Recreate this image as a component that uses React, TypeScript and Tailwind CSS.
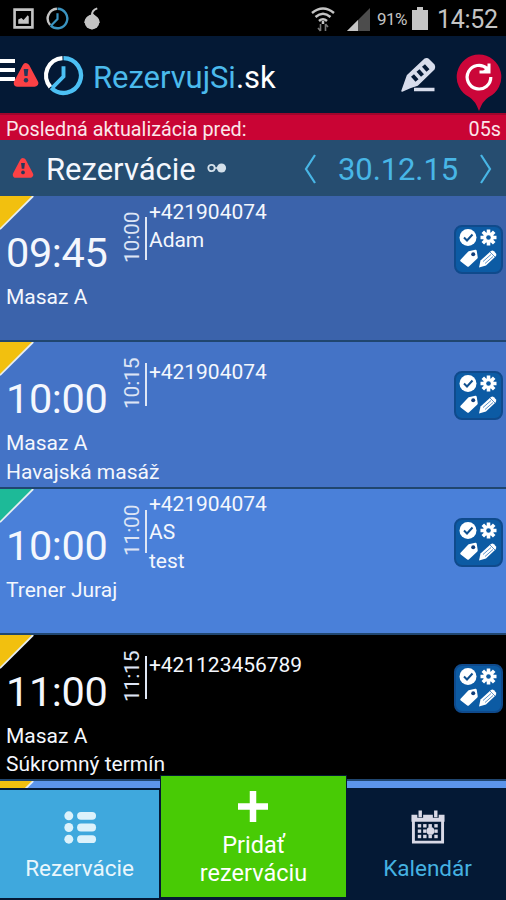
import { ReactNode } from "react";

type Reservation = {
    start: string;
    end: string;
    places: string[];
    contact: string[];
    bg: string;
    corner: string;
};

const reservations: Reservation[] = [
    { start: "09:45", end: "10:00", places: ["Masaz A"], contact: ["+421904074", "Adam"], bg: "bg-[#3b63ab]", corner: "#f2c00f" },
    { start: "10:00", end: "10:15", places: ["Masaz A", "Havajská masáž"], contact: ["+421904074"], bg: "bg-[#4473c6]", corner: "#f2c00f" },
    { start: "10:00", end: "11:00", places: ["Trener Juraj"], contact: ["+421904074", "AS", "test"], bg: "bg-[#4a80d9]", corner: "#1dba98" },
    { start: "11:00", end: "11:15", places: ["Masaz A", "Súkromný termín"], contact: ["+421123456789"], bg: "bg-black", corner: "#f2c00f" },
];

function ClockLogo({ className, light, blue }: { className: string; light: string; blue: string }) {
    return (
        <svg viewBox="0 0 40 40" className={className} fill="none" strokeWidth="4.2">
            <path d="M20 3A17 17 0 1 1 8 32" stroke={blue} />
            <path d="M7.2 31.2A17 17 0 0 1 19 3" stroke={light} />
            <path d="M20 11V21L9 32" stroke={blue} strokeWidth="3.8" />
        </svg>
    );
}

function Warning({ className }: { className: string }) {
    return (
        <svg viewBox="0 0 26 24" className={className}>
            <path d="M13 4L21.5 20H4.5Z" fill="#fc4145" stroke="#fc4145" strokeWidth="7.500" strokeLinejoin="round" />
            <path d="M10.700 6h4.600l-.8 7h-3Z" fill="#26385a" />
            <circle cx="13" cy="17.3" r="2.2" fill="#26385a" />
        </svg>
    );
}

function StatusBar() {
    return (
        <div className="flex h-9 shrink-0 items-center bg-black text-[#c4c4c4]">
            <svg viewBox="0 0 20 20" className="ml-[13px] mt-px size-[21px]">
                <path d="M1.5 1.5h17v17h-17Z" fill="none" stroke="currentColor" strokeWidth="2.5" />
                <path d="M5 15V11l3-1.5 2 2L14 7l1 1v7Z" fill="currentColor" />
            </svg>
            <ClockLogo className="ml-3 mt-px size-[23px]" light="#c4c4c4" blue="#3a93c0" />
            <svg viewBox="0 0 18 24" className="ml-3.5 h-[23px] w-[18px]">
                <path d="M5.500 9.500L10 6.500L13 10Q17 12 17 16.500L9 23.500L1 16.500Q1 12 5.500 9.500Z" fill="currentColor" />
                <circle cx="9" cy="15.800" r="7.600" fill="currentColor" />
                <path d="M9 9Q8.500 3.500 14.500 1.500" fill="none" stroke="currentColor" strokeWidth="2" />
            </svg>
            <svg viewBox="0 0 26 26" className="ml-auto mr-2.5 mt-px size-[26px]" fill="none" stroke="currentColor" strokeWidth="2.5">
                <path d="M2 7Q13 -2 24 7" />
                <path d="M5.500 11Q13 4.500 20.500 11" />
                <path d="M9 15Q13 11.500 17 15" />
                <path d="M13 15v3" />
                <path d="M10.500 18v7M8 22l2.500 3M15.500 25v-7M18 21l-2.500-3" stroke="#777" strokeWidth="1.6" />
            </svg>
            <svg viewBox="0 0 24 24" className="mr-[7px] mt-0.5 size-6">
                <path d="M24 1V24H1Z" fill="#4c4c4c" />
                <path d="M12 13V24H1Z" fill="currentColor" />
            </svg>
            <span className="mt-[3px] w-8 whitespace-nowrap text-[17px] tracking-[-0.5px]">91%</span>
            <svg viewBox="0 0 16 24" className="ml-[3px] mr-[9px] h-6 w-4">
                <path d="M5 1h6v3h5v20H0V4h5Z" fill="currentColor" />
            </svg>
            <span className="mr-2 mt-[3px] w-[61px] whitespace-nowrap text-[25px] tracking-[-0.3px]">14:52</span>
        </div>
    );
}

function Header() {
    return (
        <header className="flex h-[77px] shrink-0 items-center bg-[#041935]">
            <div className="-mt-[10px] flex h-[22px] w-[15px] shrink-0 flex-col justify-between">
                <div className="h-1 bg-white" />
                <div className="h-1 bg-white" />
                <div className="h-1 bg-white" />
            </div>
            <Warning className="-ml-0.5 h-6 w-[26px] shrink-0" />
            <ClockLogo className="ml-1 mt-px size-[41px] shrink-0" light="#ffffff" blue="#4cc0f4" />
            <h1 className="ml-[9px] mt-1.5 whitespace-nowrap text-[31px] leading-none tracking-[-0.05px] text-[#4bbaec]">
                RezervujSi<span className="text-white">.sk</span>
            </h1>
            <svg viewBox="0 0 36 36" className="ml-auto mr-5 size-9 shrink-0">
                <path d="M2 34L7.500 18.500L24.500 2.500Q27 1 29 3L34 8Q35 10 34 12L17.500 28L10 30.500Z" fill="#d8ddec" stroke="#d8ddec" strokeWidth="1.500" strokeLinejoin="round" />
                <path d="M11.500 19.500l4.500 5M17 14.500l4.500 5M22.500 9.500l4.500 5" stroke="#041935" strokeWidth="4" transform="translate(1 -1)" />
                <path d="M14 32.500h20.500" stroke="#d8ddec" strokeWidth="3.500" />
            </svg>
            <svg viewBox="0 0 46 58" className="mr-1 mt-[17px] h-[58px] w-[46px] shrink-0">
                <path d="M23 0.500a22.500 22.500 0 0 1 9.500 42.800Q26.500 47 23 57Q19.500 47 13.500 43.300A22.500 22.500 0 0 1 23 0.500Z" fill="#cb0639" />
                <path d="M31 14.500A11.800 11.800 0 1 0 34.800 23" fill="none" stroke="white" strokeWidth="3.200" />
                <path d="M33 9.500v8.500h-9.500" fill="none" stroke="white" strokeWidth="3" />
                <path d="M27 17L32 12v5Z" fill="white" />
            </svg>
        </header>
    );
}

function ActionButton() {
    return (
        <button className="mr-[3px] mt-[29px] size-[49px] shrink-0 rounded-lg border-2 border-[#0f4a8c] bg-[#0c5ba4]">
            <svg viewBox="0 0 45 45" className="size-full">
                <circle cx="12" cy="10.500" r="8.500" fill="white" />
                <path d="M8 10.500l3 3 5.500-6" fill="none" stroke="#10508f" strokeWidth="2" />
                <g stroke="white" strokeWidth="3.600">
                    <path d="M32.500 2.500v16M24.500 10.500h16M26.800 4.800l11.400 11.400M38.200 4.800L26.800 16.200" />
                </g>
                <circle cx="32.500" cy="10.500" r="5.300" fill="white" />
                <circle cx="32.500" cy="10.500" r="2.300" fill="#0c5ba4" />
                <path d="M5.500 33.500L13 25.500L19.500 24L20.500 30.500L12 38.500Z" fill="white" stroke="white" strokeWidth="2.500" strokeLinejoin="round" />
                <circle cx="17.200" cy="27.200" r="2" fill="#103d7a" />
                <path d="M23 40.500l1.500-7L35 24Q36.500 23 38 24.200L40 26.500Q40.800 28 39.500 29.500L30 38.500Z" fill="white" />
                <path d="M27 34.500L35 27.500M29 36.500L37 29.500M34 25l5 5" stroke="#4b86bf" strokeWidth="0.900" />
            </svg>
        </button>
    );
}

function Corner({ color }: { color: string }) {
    return (
        <svg viewBox="0 0 36 36" className="absolute left-0 top-0 size-9">
            <path d="M0 0H33L0 33Z" fill={color} />
            <path d="M33.200 0L0 33.200" stroke="#e6edf2" strokeWidth="1.800" />
        </svg>
    );
}

function ReservationRow({ item }: { item: Reservation }) {
    return (
        <li className={`relative flex h-[146.25px] shrink-0 items-start border-b-2 border-[#20466f] ${item.bg}`}>
            <Corner color={item.corner} />
            <div className="flex w-[121px] shrink-0 flex-col pl-1.5 pt-9">
                <span className="text-[41.500px] leading-[42px] tracking-[-0.4px]">{item.start}</span>
                <div className="mt-[9px] text-[21px] leading-[28.500px]">
                    {item.places.map((place) => (
                        <p key={place} className="whitespace-nowrap">{place}</p>
                    ))}
                </div>
            </div>
            <span className="mt-4 h-[52px] w-[22px] shrink-0 rotate-180 text-right text-[21px] leading-[22px] tracking-[-0.2px] text-[#dde5f5] [writing-mode:vertical-rl]">
                {item.end}
            </span>
            <div className="ml-0.5 mt-[21px] h-[43px] w-[1.500px] shrink-0 bg-[#dfe7f5]" />
            <div className="ml-[2.500px] flex min-h-[59px] flex-1 flex-col justify-center pt-px text-[21px] leading-[28.500px] tracking-[-0.05px]">
                {item.contact.map((line) => (
                    <p key={line}>{line}</p>
                ))}
            </div>
            <ActionButton />
        </li>
    );
}

function NavItem({ className, label, children }: { className: string; label: string; children: ReactNode }) {
    return (
        <button className={`flex flex-col items-center pb-4 text-[22.500px] leading-[28px] ${className}`}>
            {children}
            <span>{label}</span>
        </button>
    );
}

function BottomNav() {
    return (
        <nav className="relative flex h-28 shrink-0 bg-[#041935] pb-0.5">
            <NavItem className="mt-0.5 w-[159px] bg-[#3fa8dd] pt-5 text-[#e9f6fc]" label="Rezervácie">
                <svg viewBox="0 0 34 36" className="mb-[9px] h-9 w-[34px]" fill="#ddf2fb">
                    {[6, 18, 30].map((y) => (
                        <g key={y}>
                            <circle cx="5.500" cy={y} r="4.600" />
                            <rect x="14" y={y - 4} width="19.500" height="8" rx="4" />
                        </g>
                    ))}
                </svg>
            </NavItem>
            <button className="-mt-[13px] ml-px flex w-[187px] flex-col items-center border border-[#041935] bg-[#48cb05] pt-[15px] text-[23.500px] leading-[28px] text-white">
                <svg viewBox="0 0 30 32" className="mb-2 mr-0.5 h-8 w-[30px]">
                    <path d="M15 0v31M0 15.500h30" stroke="white" strokeWidth="6.500" />
                </svg>
                <span>Pridať</span>
                <span>rezerváciu</span>
            </button>
            <NavItem className="flex-1 pl-0.5 pt-[22px] text-[#45b2e2]" label="Kalendár">
                <svg viewBox="0 0 36 36" className="mb-[9px] size-9">
                    <path d="M3 8h30v25H3Z" fill="none" stroke="#d9d9e6" strokeWidth="3" />
                    <path d="M1 5h34v7H1Z" fill="#d9d9e6" />
                    <path d="M10 1v7M26 1v7" stroke="#041935" strokeWidth="6" />
                    <path d="M10 0.500v7M26 0.500v7" stroke="#d9d9e6" strokeWidth="3.500" />
                    {[16, 21.5, 27].map((y) =>
                        [9, 14.5, 20, 26].map((x) => <rect key={`${x}-${y}`} x={x - 1.5} y={y - 1.5} width="3.500" height="3.500" fill="#d9d9e6" />)
                    )}
                    <circle cx="20.500" cy="21.500" r="4" fill="#d9d9e6" />
                </svg>
            </NavItem>
        </nav>
    );
}

export default function App() {
    return (
        <div className="flex h-[900px] w-[506px] flex-col overflow-hidden bg-[#041935] font-['Roboto',sans-serif] text-[#f4f7fd]">
            <StatusBar />
            <Header />
            <div className="flex h-[27px] shrink-0 items-center justify-between border-t-2 border-[#a0052c] bg-[#c90434] pl-1.5 pr-[5px] pt-1 text-[19.750px] leading-none text-[#fbe6ea]">
                <span>Posledná aktualizácia pred:</span>
                <span>05s</span>
            </div>
            <div className="flex h-14 shrink-0 items-center bg-[#264d70]">
                <Warning className="ml-[11px] h-5 w-6" />
                <h2 className="ml-[11px] mt-0.5 w-[150px] whitespace-nowrap text-[31px] leading-none">Rezervácie</h2>
                <svg viewBox="0 0 20 10" className="ml-[11px] h-2.5 w-5">
                    <circle cx="4.500" cy="5" r="3.200" fill="none" stroke="#d4e0ea" strokeWidth="1.800" />
                    <path d="M8 5h4" stroke="#d4e0ea" strokeWidth="1.500" />
                    <circle cx="14.500" cy="5" r="4.600" fill="#d4e0ea" />
                </svg>
                <svg viewBox="0 0 12 30" className="ml-auto mt-px h-[30px] w-3" fill="none" stroke="#48b6e6" strokeWidth="2.200">
                    <path d="M11 1L2 15L11 29" />
                </svg>
                <span className="ml-[22px] mt-0.5 w-[120px] whitespace-nowrap text-[31px] leading-none tracking-[-0.1px] text-[#48b6e6]">30.12.15</span>
                <svg viewBox="0 0 12 30" className="ml-[22px] mr-3.5 mt-px h-[30px] w-3" fill="none" stroke="#48b6e6" strokeWidth="2.200">
                    <path d="M1 1L10 15L1 29" />
                </svg>
            </div>
            <ul className="flex h-[592px] shrink-0 flex-col overflow-hidden">
                {reservations.map((item, i) => (
                    <ReservationRow key={i} item={item} />
                ))}
                <li className="relative h-[7px] shrink-0 overflow-hidden bg-[#5c95eb]">
                    <Corner color="#f2c00f" />
                </li>
            </ul>
            <BottomNav />
        </div>
    );
}
